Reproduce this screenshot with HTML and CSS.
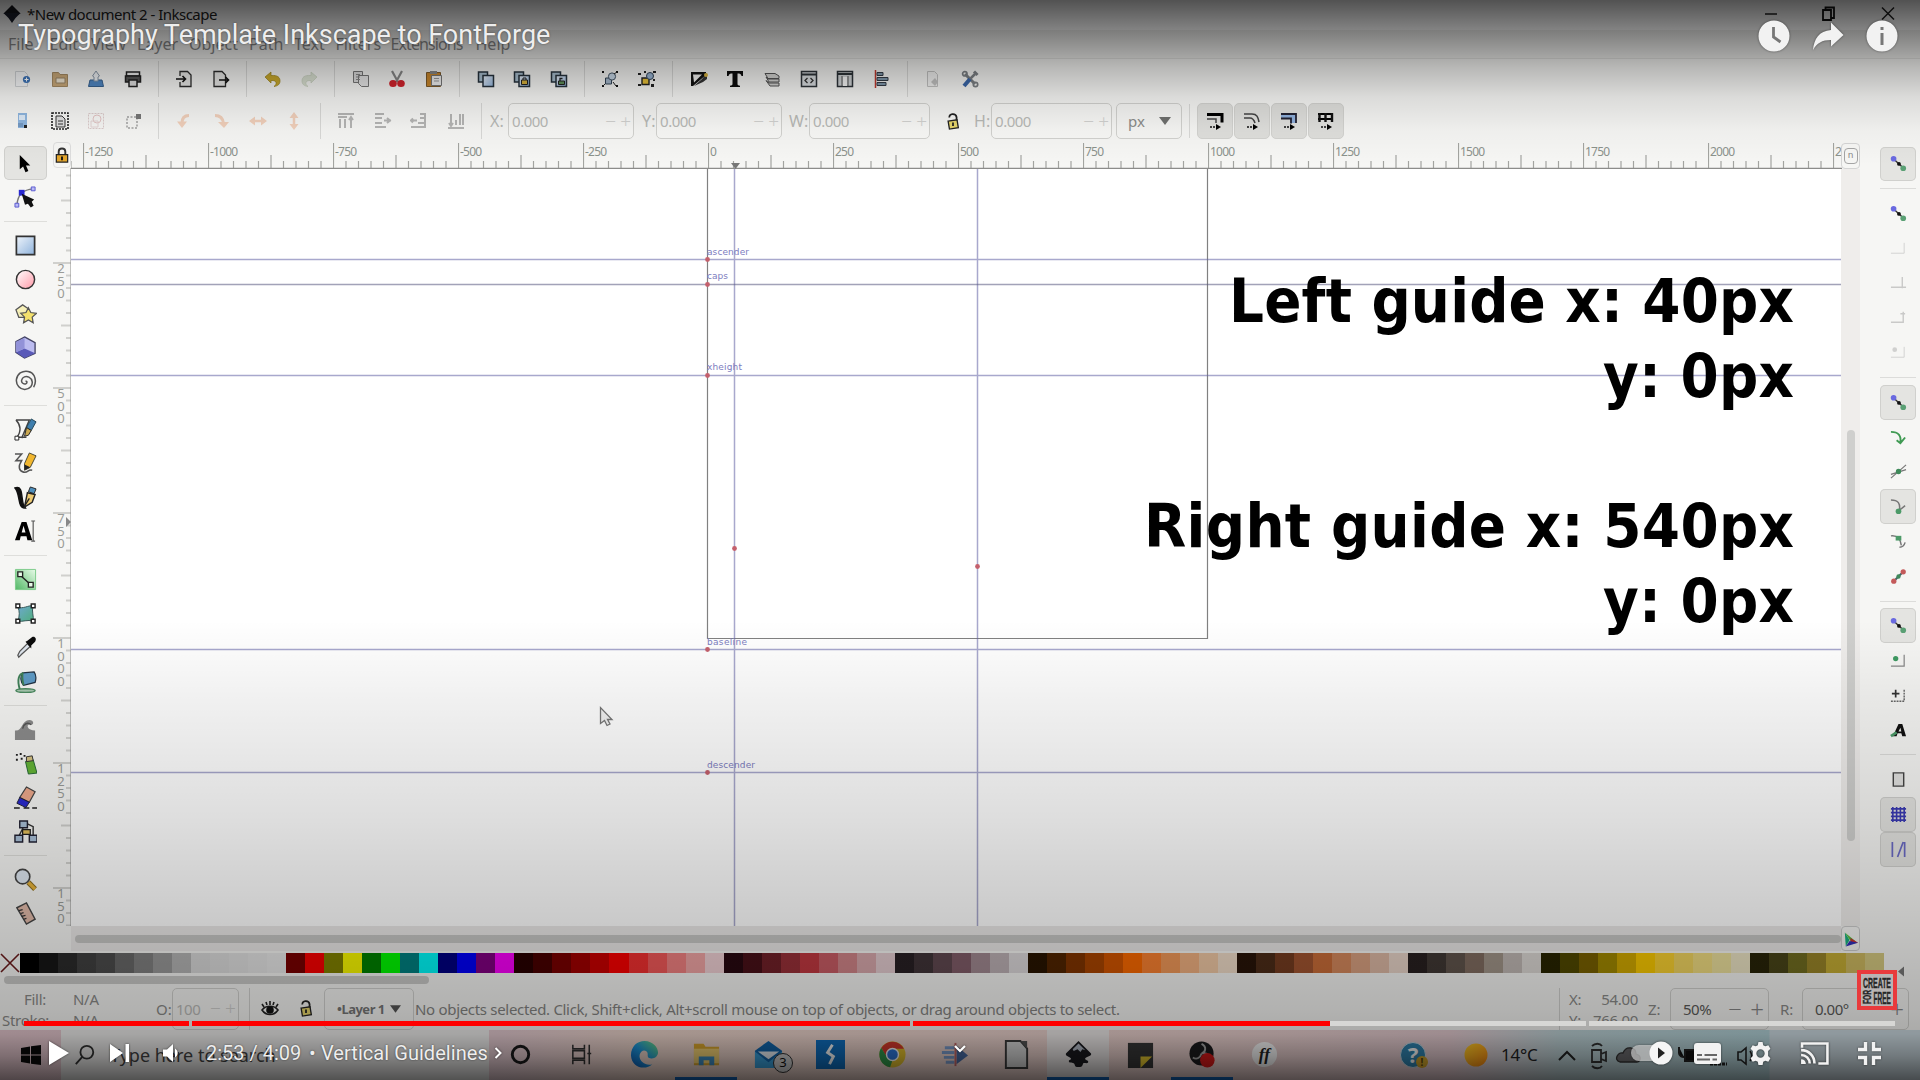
FILE: index.html
```html
<!DOCTYPE html>
<html lang="en">
<head>
<meta charset="utf-8">
<title>Typography Template Inkscape to FontForge</title>
<link rel="stylesheet" href="styles.css">
</head>
<body>
<svg class="defs" aria-hidden="true">
  <defs>
    <linearGradient id="blueG" x1="0" y1="0" x2="1" y2="1"><stop offset="0" stop-color="#eef4fb"/><stop offset="1" stop-color="#8fb3dc"/></linearGradient>
    <linearGradient id="pinkG" x1="0" y1="0" x2="1" y2="1"><stop offset="0" stop-color="#fff"/><stop offset="1" stop-color="#ff9aa8"/></linearGradient>
    <linearGradient id="greenG" x1="1" y1="0" x2="0" y2="1"><stop offset="0" stop-color="#e8fbe8"/><stop offset="1" stop-color="#52b866"/></linearGradient>
    <linearGradient id="tealG" x1="0" y1="0" x2="1" y2="1"><stop offset="0" stop-color="#6fa8d0"/><stop offset="1" stop-color="#4fae7c"/></linearGradient>
    <linearGradient id="edgeG" x1="0" y1="1" x2="1" y2="0"><stop offset="0" stop-color="#0c59b4"/><stop offset=".5" stop-color="#1d9ae0"/><stop offset="1" stop-color="#6fdc7c"/></linearGradient>
    <linearGradient id="sunG" x1="0" y1="0" x2="1" y2="1"><stop offset="0" stop-color="#ffd028"/><stop offset="1" stop-color="#ff8a10"/></linearGradient>
  </defs>
  <symbol id="dup" viewBox="0 0 18 18"><path d="M1.500 2h9v10h-9z" fill="#a9bfcf" stroke="#26323c" stroke-width="1.500"/><path d="M6 5.500h10.500v11H6z" fill="url(#blueG)" stroke="#26323c" stroke-width="1.500"/></symbol>
  <symbol id="snap" viewBox="0 0 18 18"><path d="M3 3.500l12 11" stroke="#333" stroke-width="1.500"/><circle cx="3.800" cy="4" r="3" fill="#6a6ae0"/><circle cx="14" cy="14" r="3" fill="#5aa074"/><circle cx="9.500" cy="9.500" r="2" fill="#111"/></symbol>
  <symbol id="padlock" viewBox="0 0 18 20"><path d="M5 5.500C4 1 12 0 13 5v5" fill="none" stroke="#222" stroke-width="2"/><path d="M3.500 9.500l10-1.500 1.500 9-10 1.500z" fill="#e6d56a" stroke="#222" stroke-width="1.500"/><path d="M9 11v4" stroke="#222" stroke-width="2"/></symbol>
</svg>

<main class="video">
  <section class="frame">
    <header class="titlebar">
      <svg class="logo" viewBox="0 0 18 18"><path d="M9 0l8.500 8.500L9 12 .5 8.500z" fill="#15161c"/><path d="M.5 8l5 5 3.500 5 3.500-5 5-5z" fill="#1b1f2c"/></svg>
      <span class="doc-name">*New document 2 - Inkscape</span>
      <svg class="winbtns" viewBox="0 0 140 18"><path d="M5 9h12" stroke="#222" stroke-width="1.500"/><path d="M63 5h8v10h-8zM65.500 5V2.500H74V13h-3" fill="none" stroke="#111" stroke-width="1.800"/><path d="M122 2.500l12 12M134 2.500l-12 12" stroke="#222" stroke-width="1.500"/></svg>
    </header>
    <nav class="menubar">
      <span>File</span><span>Edit</span><span>View</span><span>Layer</span><span>Object</span><span>Path</span><span>Text</span><span>Filters</span><span>Extensions</span><span>Help</span>
    </nav>

    <div class="toolbar">
      <b><svg viewBox="0 0 18 18"><path d="M1.500 1.500h9l3 3v12h-12z" fill="#f5f6f7" stroke="#cfd2d4"/><circle cx="12.500" cy="9.500" r="3.600" fill="#3d74b8"/><path d="M12.500 7.500v4M10.500 9.500h4" stroke="#fff"/></svg></b>
      <b><svg viewBox="0 0 18 18"><path d="M1.500 2.500h6l1.500 2h7.500v12h-15z" fill="#c9a878" stroke="#a58a62"/><path d="M5 8h9v5H5z" fill="#eee4d0" stroke="#9a8668"/></svg></b>
      <b><svg viewBox="0 0 18 18"><path d="M3 10h12l1.500 6.500h-15z" fill="#4f86c2" stroke="#36618f"/><path d="M9 1l3.500 5-1.500 1v4H7V7L5.500 6z" fill="#eef1f4" stroke="#8a98a8"/></svg></b>
      <b><svg viewBox="0 0 18 18"><path d="M2.500 2h13v4h-13z" fill="#eee" stroke="#222" stroke-width="1.500"/><path d="M1.500 6h15v6h-15z" fill="#555" stroke="#222" stroke-width="1.500"/><path d="M5 10h8v6.500H5z" fill="#ddd" stroke="#222" stroke-width="1.500"/></svg></b>
      <i></i>
      <b><svg viewBox="0 0 18 18"><path d="M5 6V1.500h7.500L16 5v11.500H5V12" fill="#e8e8e6" stroke="#2c2c2c" stroke-width="1.300"/><path d="M1 9h9M7.500 6l3 3-3 3" fill="none" stroke="#111" stroke-width="1.600"/></svg></b>
      <b><svg viewBox="0 0 18 18"><path d="M2 1.500h8L13.500 5v11.500H2z" fill="#e8e8e6" stroke="#2c2c2c" stroke-width="1.300"/><path d="M7 10h9M13.500 7l3 3-3 3" fill="none" stroke="#111" stroke-width="1.600"/></svg></b>
      <i></i>
      <b><svg viewBox="0 0 18 18"><path d="M1 7l6-5v3.500c7-.5 9 2 9 5.500 0 3-2 5-6 5.500 3-2 3.500-6.500-3-6V13z" fill="#c9a92c" stroke="#9a8118" stroke-width=".7"/></svg></b>
      <b><svg viewBox="0 0 18 18" opacity=".45"><path d="M17 7l-6-5v3.500c-7-.5-9 2-9 5.500 0 3 2 5 6 5.500-3-2-3.500-6.500 3-6V13z" fill="#b9c9a9" stroke="#8ba07a" stroke-width=".7"/></svg></b>
      <i></i>
      <b><svg viewBox="0 0 18 18"><path d="M1.500 1.500h9v11h-9z" fill="#ddd" stroke="#777"/><path d="M6.500 5.500h10v11h-7l-3-3z" fill="#e6e6e6" stroke="#777"/><path d="M4 4.500h4M4 7h4M4 9.500h4" stroke="#888"/></svg></b>
      <b><svg viewBox="0 0 18 18"><path d="M4 1l6 11M14 1L8 12" stroke="#888" stroke-width="2.200"/><ellipse cx="5" cy="13.500" rx="3.800" ry="3.500" fill="#d2232c"/><ellipse cx="13" cy="13.500" rx="3.800" ry="3.500" fill="#d2232c"/></svg></b>
      <b><svg viewBox="0 0 18 18"><path d="M1.500 2.500h14v14h-14z" fill="#c8862c" stroke="#7d5a2a"/><path d="M5 1h7v3H5z" fill="#888"/><path d="M6.500 5.500h10v10h-10z" fill="#f0f0f0" stroke="#777"/><path d="M9 8.500h5M9 11h5" stroke="#999"/></svg></b>
      <i></i>
      <b><svg><use href="#dup"/></svg></b>
      <b><svg viewBox="0 0 18 18"><use href="#dup" width="18" height="18"/><path d="M8.500 10h6v4.500h-6z" fill="#d6b13c" stroke="#222"/><path d="M10 10V8h3v2" fill="none" stroke="#222"/></svg></b>
      <b><svg viewBox="0 0 18 18"><use href="#dup" width="18" height="18"/><path d="M8.500 11h6v3.500h-6z" fill="#5d8f58" stroke="#222"/><path d="M10 11V8.500h2.500" fill="none" stroke="#222" stroke-width="1.300"/></svg></b>
      <i></i>
      <b><svg viewBox="0 0 18 18"><path d="M4.500 8h6v6h-6z" fill="#a6b8cc" stroke="#345"/><circle cx="11" cy="6.500" r="3.600" fill="#c7d7e6" stroke="#456"/><path d="M1 1h2v2H1zM15 1h2v2h-2zM1 15h2v2H1zM15 15h2v2h-2z" fill="#111"/><path d="M12 12l3 4M4 14l-2 2M13 4l3-2" stroke="#222"/></svg></b>
      <b><svg viewBox="0 0 18 18"><path d="M4 8h7v6.500H4z" fill="#e8c138" stroke="#222" stroke-width="1.400"/><circle cx="12" cy="6" r="3.500" fill="#9bb6d4" stroke="#345"/><path d="M0 3h3v2H0zM6 1h2v2H6zM15 1h3v2h-3zM0 14h3v2H0zM13 14h3v3h-3zM15 9h2v2h-2z" fill="#222"/></svg></b>
      <i></i>
      <b><svg viewBox="0 0 18 18"><path d="M1 2h15v3L3 16H1z" fill="#111"/><path d="M3 4.500h9l-8 8z" fill="#f4f4f2"/><path d="M17 3v6l-4 3-9 4 8-7z" fill="#333"/><circle cx="16" cy="5" r="2" fill="#dcb63e"/></svg></b>
      <b><svg viewBox="0 0 18 18"><path d="M1 1h16v5h-1.500C15 4 14 3.500 11.500 3.500V14c0 1.500 1 1.500 2.500 1.800V17H4v-1.200c1.500-.3 2.500-.3 2.500-1.800V3.500C4 3.500 3 4 2.500 6H1z" fill="#0c0c0c"/></svg></b>
      <b><svg viewBox="0 0 18 18"><path d="M2 3.500h10l4 2.500v2.500H5zM3 7l2 2h11v3H6zM3 10.500l3 2.500h10v3H7z" fill="#d3d3d1" stroke="#555"/></svg></b>
      <b><svg viewBox="0 0 18 18"><path d="M1.500 1.500h15v15h-15z" fill="#d9dde0" stroke="#2d3338" stroke-width="1.500"/><path d="M2 4.500h14" stroke="#2d3338" stroke-width="2"/><path d="M7.500 8L5 10.500 7.500 13M10.500 8l2.500 2.500-2.500 2.500" fill="none" stroke="#333" stroke-width="1.300"/></svg></b>
      <b><svg viewBox="0 0 18 18"><path d="M1.500 1.500h15v15h-15z" fill="#cfd3d5" stroke="#2d3338" stroke-width="1.500"/><path d="M2 4h14" stroke="#2d3338" stroke-width="2"/><path d="M6 6v10M12 6v10" stroke="#555"/><path d="M7 7h4v9H7z" fill="#f6f6f6"/></svg></b>
      <b><svg viewBox="0 0 18 18"><path d="M2.500 0v18" stroke="#c0392f" stroke-width="1.500"/><path d="M4 2.500h6v3H4zM4 7.500h11v3H4zM4 12.500h9v3H4z" fill="#7f97ab" stroke="#333b45"/></svg></b>
      <i></i>
      <b><svg viewBox="0 0 18 18" opacity=".55"><path d="M3.500 1.500h7l3 3v12h-10z" fill="#eee" stroke="#999"/><path d="M7 12l4-4 3 4-3 4z" fill="#999"/></svg></b>
      <b><svg viewBox="0 0 18 18"><path d="M4 4l10 10" stroke="#7c8084" stroke-width="3"/><path d="M14 4L9 9" stroke="#7c8084" stroke-width="2.500"/><path d="M9 9l-6 7" stroke="#3a66a8" stroke-width="4"/><circle cx="3.800" cy="3.800" r="2.200" fill="none" stroke="#7c8084" stroke-width="1.700"/><circle cx="14.500" cy="14.500" r="2.200" fill="none" stroke="#7c8084" stroke-width="1.700"/><path d="M13 1.500l3.500 3.500" stroke="#7c8084" stroke-width="3"/></svg></b>
    </div>

    <div class="controls">
      <b><svg viewBox="0 0 18 18"><path d="M4 1h9v15H4z" fill="#8fb6df"/><path d="M5 3h6v5H5z" fill="#dce9f6"/><path d="M4 12h5M4 14h5" stroke="#5a7fa8"/><path d="M10 13h3v3h-3z" fill="#222"/></svg></b>
      <b><svg viewBox="0 0 18 18"><path d="M1 1h16v16H1z" fill="none" stroke="#222" stroke-width="1.600" stroke-dasharray="2 1"/><path d="M5 4h6l3 3v8H5z" fill="#ddd" stroke="#333"/><path d="M7 9h5M7 12h5" stroke="#333"/></svg></b>
      <b><svg viewBox="0 0 18 18" opacity=".45"><path d="M1.500 1.500h15v15h-15z" fill="none" stroke="#b99" stroke-dasharray="2 1"/><circle cx="10" cy="7" r="4" fill="none" stroke="#c88"/><path d="M4 9h7v6H4z" fill="none" stroke="#caa"/></svg></b>
      <b><svg viewBox="0 0 18 18"><path d="M3 5h10v11H3z" fill="none" stroke="#777" stroke-dasharray="2 1.500"/><path d="M12 2h5v5h-5z" fill="#777"/></svg></b>
      <i></i>
      <b class="dim"><svg viewBox="0 0 18 18"><path d="M14 3.500C9 3.500 7 6 7 11" fill="none" stroke="#e88a52" stroke-width="3"/><path d="M2 9.500h10L7 16z" fill="#e88a52"/></svg></b>
      <b class="dim"><svg viewBox="0 0 18 18"><path d="M3 3.500c6 0 8 3 8.500 8" fill="none" stroke="#e88a52" stroke-width="3"/><path d="M6 10h11l-5 6z" fill="#e88a52"/></svg></b>
      <b class="dim"><svg viewBox="0 0 18 18"><path d="M3 9h12" stroke="#e88a52" stroke-width="2.500"/><path d="M0 9l6-4.500v9zM18 9l-6-4.500v9z" fill="#e88a52"/></svg></b>
      <b class="dim"><svg viewBox="0 0 18 18"><path d="M9 3v12" stroke="#e88a52" stroke-width="2.500"/><path d="M9 0l4.500 6h-9zM9 18l4.500-6h-9z" fill="#e88a52"/></svg></b>
      <i></i>
      <b class="pale"><svg viewBox="0 0 18 18"><path d="M1 2h16M1 5h9M3 7v9M8 7v9M14 16V6M12 8l2-3 2 3" fill="none" stroke="#555" stroke-width="2"/></svg></b>
      <b class="pale"><svg viewBox="0 0 18 18"><path d="M1 2h9M1 6h7M1 11h7M1 15h11M10 8.500h7M13 6l3 2.500-3 2.500" fill="none" stroke="#555" stroke-width="2"/></svg></b>
      <b class="pale"><svg viewBox="0 0 18 18"><path d="M10 2h6M10 6h6M8 11h8M1 15h15M15 2v13M1 8.500h6M3 6.500l-2 2 2 2" fill="none" stroke="#555" stroke-width="2"/></svg></b>
      <b class="pale"><svg viewBox="0 0 18 18"><path d="M4 2v11M2 11l2 3 2-3M9 13V8M13 13V2M16 13V2M1 16h16" fill="none" stroke="#555" stroke-width="2"/></svg></b>
      <i></i>
      <label class="lx">X:</label><div class="spin wx"><span>0.000</span><em>−</em><em>+</em></div>
      <label class="ly">Y:</label><div class="spin wx"><span>0.000</span><em>−</em><em>+</em></div>
      <label class="lw">W:</label><div class="spin ww"><span>0.000</span><em>−</em><em>+</em></div>
      <svg class="lockw"><use href="#padlock"/></svg>
      <label class="lh">H:</label><div class="spin ww"><span>0.000</span><em>−</em><em>+</em></div>
      <div class="unit"><span>px</span><svg viewBox="0 0 12 8"><path d="M0 0h12L6 8z" fill="#6f706e"/></svg></div>
      <i class="tight"></i>
      <div class="toggles">
        <b><svg viewBox="0 0 18 18"><path d="M1 2.500h15v8" fill="none" stroke="#000" stroke-width="3"/><path d="M1 7h9v4" fill="none" stroke="#444" stroke-width="1.500"/><path d="M4 15h6" stroke="#111" stroke-width="1.500" stroke-dasharray="2 1"/><path d="M10 12l5 3-5 3z" fill="#000"/></svg></b>
        <b><svg viewBox="0 0 18 18"><path d="M1 2h8c5 0 6 3 7 8M1 6h6c3 0 4 2 5 5" fill="none" stroke="#444" stroke-width="1.600"/><path d="M4 15h6" stroke="#111" stroke-width="1.500" stroke-dasharray="2 1"/><path d="M10 12l5 3-5 3z" fill="#000"/></svg></b>
        <b><svg viewBox="0 0 18 18"><path d="M1 2h15v9h-5V6H1z" fill="#8fb0dc"/><path d="M1 2h15v9M1 6.500h10v5" fill="none" stroke="#223" stroke-width="1.800"/><path d="M4 15h6" stroke="#111" stroke-width="1.500" stroke-dasharray="2 1"/><path d="M10 12l5 3-5 3z" fill="#000"/></svg></b>
        <b><svg viewBox="0 0 18 18"><path d="M1 2h15M1 7h15" stroke="#000" stroke-width="2.200"/><path d="M2.500 1v9M8.500 1v9M15 1v9" stroke="#111" stroke-width="2.400"/><path d="M4 15h6" stroke="#111" stroke-width="1.500" stroke-dasharray="2 1"/><path d="M10 12l5 3-5 3z" fill="#000"/></svg></b>
      </div>
    </div>

    <div class="workspace">
      <aside class="tools">
        <b class="on"><svg viewBox="0 0 24 24"><path d="M7 3v15l3.500-3 2.500 6 3-1.300-2.500-5.700H18z" fill="#000" transform="translate(-1)"/></svg></b>
        <b><svg viewBox="0 0 24 24"><path d="M3 20C4 8 10 4 20 3" fill="none" stroke="#777" stroke-width="1.500"/><path d="M1 18h4v4H1zM18 1h4v4h-4z" fill="#b9b9f5" stroke="#5a5ad0"/><path d="M5 4h6v6H5z" fill="#2828d0"/><path d="M8 8l13 6-2.500 2.500 2 4-3 2-3-4-3 1z" fill="#111"/></svg></b>
        <i></i>
        <b><svg viewBox="0 0 24 24"><path d="M2.500 2.500h19v19h-19z" fill="url(#blueG)" stroke="#333" stroke-width="1.800"/></svg></b>
        <b><svg viewBox="0 0 24 24"><circle cx="12" cy="12" r="9.500" fill="url(#pinkG)" stroke="#333" stroke-width="1.500"/></svg></b>
        <b><svg viewBox="0 0 24 24"><path d="M2 8l7-5 6 4-1 9H5z" fill="#f6f0b8" stroke="#555" stroke-width="1.300"/><path d="M15 6l2.500 5 6 .8-4.500 4 1 6-5-3-5 3 1-6-4-4 5.500-.8z" fill="#f3e06c" stroke="#555" stroke-width="1.300"/></svg></b>
        <b><svg viewBox="0 0 24 24"><path d="M11 1l11 6v11l-11 5L2 17V6z" fill="#bcbcf0" stroke="#446" stroke-width="1.400"/><path d="M11 13l11 5-11 5-9-6z" fill="#5a5ab8"/><path d="M11 2v11l-9 4V6z" fill="#9292d8"/></svg></b>
        <b><svg viewBox="0 0 24 24"><path d="M12 12c2-1 2 2 0 2.500-3 .5-4.500-2-4-4 .7-3.300 4.500-4.500 7.500-3 4 2 4.500 7 2 10-3.500 4-9.500 3.500-12.500 0-4-4.500-3-11 1.500-14.500 5-3 12-2 14.500 3 1.700 3.500 1.700 8-.5 12" fill="none" stroke="#555" stroke-width="1.600"/></svg></b>
        <i></i>
        <b><svg viewBox="0 0 24 24"><path d="M2 2h14L8 21M2 2c5 5 6 12 1 18h10" fill="none" stroke="#444" stroke-width="1.500"/><path d="M1 19h4v4H1z" fill="#fff" stroke="#222"/><path d="M18 1l5 3-5 9-5-3z" fill="#3f7fae" stroke="#245"/><path d="M13 10l5 3-3 5-4 1z" fill="#caa850" stroke="#222"/></svg></b>
        <b><svg viewBox="0 0 24 24"><path d="M1 2h7L2 9h6c-4 6-3 11 2 12s4-3 9-2" fill="none" stroke="#555" stroke-width="1.600"/><path d="M16 1l7 3-6 12-6 3 0-7z" fill="#f1b62e" stroke="#443"/><path d="M11 13l6 3-6 3z" fill="#222"/></svg></b>
        <b><svg viewBox="0 0 24 24"><path d="M1 2c9-3 6 10 9 18l2 3C3 24 7 8 1 2z" fill="#111" stroke="#111" stroke-width="1.500"/><path d="M17 1l6 2-2 5-6-2z" fill="#4d8fbd" stroke="#222"/><path d="M14 7l8 2-3 8-8 5z" fill="#edca73" stroke="#222" stroke-width="1.500"/><path d="M11 21l5-8" stroke="#222" stroke-width="1.400"/></svg></b>
        <b><svg viewBox="0 0 24 24"><path d="M1 21L8 2h5l6 19h-5l-1-4H7l-1 4zM8 13h4l-2-7z" fill="#000" fill-rule="evenodd"/><path d="M18 1h4M20 1v21M18 22h4" stroke="#555" stroke-width="1.200"/></svg></b>
        <i></i>
        <b><svg viewBox="0 0 24 24"><path d="M1.500 1.500h21v21h-21z" fill="url(#greenG)" stroke="#7ccb8a"/><path d="M6 7l12 11" stroke="#222" stroke-width="1.500"/><path d="M4 4h5v5H4zM15 15h5v5h-5z" fill="#e8fbe8" stroke="#222" stroke-width="1.400"/></svg></b>
        <b><svg viewBox="0 0 24 24"><path d="M4 5c5 3 11-2 16-1-2 6 1 11 0 16-6-2-11 1-16 0 2-6 2-10 0-15z" fill="url(#tealG)" stroke="#355"/><path d="M2 2h4v4H2zM18 2h4v4h-4zM2 18h4v4H2zM18 18h4v4h-4z" fill="#fff" stroke="#222" stroke-width="1.500"/></svg></b>
        <b><svg viewBox="0 0 24 24"><path d="M14 8l3 3L8 19l-3 3-1-2 2-4z" fill="#dfe6ee" stroke="#555" stroke-width="1.300"/><path d="M12 6l2-1 5-4c3-1 5 2 3 5l-4 4v3z" fill="#0b0b0b"/></svg></b>
        <b><svg viewBox="0 0 24 24"><ellipse cx="12" cy="21.500" rx="10" ry="2" fill="#a8c8b0" stroke="#4b8a60" stroke-width="1.500"/><path d="M9 3l12-1c2 3 2 8 1 11l-12 3C7 13 6 7 9 3z" fill="#5e9bc6" stroke="#234" stroke-width="1.300"/><path d="M10 3C5 4 3 10 6 20M9 3c-1 5 0 9 1 13" fill="none" stroke="#3f8058" stroke-width="2"/></svg></b>
        <i></i>
        <b><svg viewBox="0 0 24 24"><path d="M1 13c8 1 7-11 15-11 5 0 5 5 2 5-6-2-5 6 4 6v10H1z" fill="#8b8b8b"/><path d="M9 11c1-5 5-7 9-4" fill="none" stroke="#555" stroke-width="1.500"/></svg></b>
        <b><svg viewBox="0 0 24 24"><path d="M12 10l8-2 4 14-9 1z" fill="#64b436" stroke="#263"/><path d="M13 5l6-1 1 5-7 1z" fill="#d6c383" stroke="#333"/><path d="M2 2h2v2H2zM6 1h2v2H6zM2 7h2v2H2zM7 6h2v2H7zM10 3h2v2h-2z" fill="#222"/></svg></b>
        <b><svg viewBox="0 0 24 24"><path d="M13 1l9 5-6 11-10-5z" fill="#eea98c" stroke="#444" stroke-width="1.300"/><path d="M6 12l10 5-3.500 5.500L3 18z" fill="#2a2ad0" stroke="#223"/><path d="M0 23h6M10 23h6M19 23h5" stroke="#222" stroke-width="1.600"/></svg></b>
        <b><svg viewBox="0 0 24 24"><path d="M10 7L5 17M14 4l6 3v9" fill="none" stroke="#333" stroke-width="1.500"/><path d="M6 1h8v7H6zM1 16h8v7H1zM16 16h8v7h-8z" fill="#a9c0d8" stroke="#223" stroke-width="1.500"/><path d="M9 10h8v5H9z" fill="#e3bf5c" stroke="#222" stroke-width="1.300"/></svg></b>
        <i></i>
        <b><svg viewBox="0 0 24 24"><path d="M15 15l7 7" stroke="#8a6d22" stroke-width="5.500"/><path d="M15 15l7 7" stroke="#e6b23a" stroke-width="3.500"/><circle cx="9" cy="9" r="7.500" fill="#dfe8f2" stroke="#444" stroke-width="1.700"/></svg></b>
        <b><svg viewBox="0 0 24 24"><path d="M3 6l10-5 9 17-9 5z" fill="#e0b9a8" stroke="#444" stroke-width="1.500"/><path d="M5 9l4-1M7 12l3-1M8 15l4-1M10 18l3-1" stroke="#333" stroke-width="1.300"/></svg></b>
      </aside>

      <div class="vruler-col">
        <div class="ruler-lock"><svg viewBox="0 0 14 18"><path d="M3.500 9V5c0-4.500 7-4.500 7 0v4" fill="none" stroke="#333" stroke-width="2"/><path d="M1 8h12v8H1z" fill="#e2a52c" stroke="#222" stroke-width="1.300"/><path d="M7 10v4" stroke="#111" stroke-width="2"/></svg></div>
        <svg class="vruler" width="19" height="758">
          <defs><pattern id="vt" width="19" height="125" y="94.500" patternUnits="userSpaceOnUse"><path d="M0 .5h19M8 63h11M13 13h6M13 25.500h6M13 38h6M13 50.500h6M13 75.500h6M13 88h6M13 100.500h6M13 113h6" stroke="#a9aaa6"/></pattern></defs>
          <rect width="19" height="758" fill="url(#vt)"/><path d="M18 0v758" stroke="#8c8c8a"/>
          <g class="vlabels"></g>
          <path d="M13 349l5 5-5 5z" fill="#888"/>
        </svg>
      </div>

      <div class="stage">
        <svg class="hruler" width="1771" height="29">
          <defs><pattern id="ht" width="125" height="29" x="12" patternUnits="userSpaceOnUse"><path d="M.5 3v25M63 15v13M13 21v7M25.500 21v7M38 21v7M50.500 21v7M75.500 21v7M88 21v7M100.500 21v7M113 21v7" stroke="#a3a4a0" stroke-width="1.200"/></pattern></defs>
          <rect width="1771" height="29" fill="url(#ht)"/><path d="M0 28.500h1771" stroke="#8c8c8a" stroke-width="1.300"/>
          <g class="hlabels"></g>
          <path d="M660 23h9l-4.500 6z" fill="#777"/>
        </svg>
        <svg class="canvas" width="1771" height="757" viewBox="71 169 1771 757">
          <path d="M707.500 169v469.500h500V169" fill="none" stroke="#808080" stroke-width="1.200"/>
          <path class="guide" d="M71 259.500h1771M71 375.500h1771M71 649.500h1771M71 772.500h1771M734.500 169v757M977.500 169v757"/>
          <path class="guide strong" d="M71 284.500h1771"/>
          <g fill="#c4606c"><circle cx="707.500" cy="259.500" r="2.400"/><circle cx="707.500" cy="284.500" r="2.400"/><circle cx="707.500" cy="375.500" r="2.400"/><circle cx="707.500" cy="649.500" r="2.400"/><circle cx="707.500" cy="772.500" r="2.400"/><circle cx="734.500" cy="548.500" r="2.400"/><circle cx="977.500" cy="566.500" r="2.400"/></g>
          <g class="gl"><text x="707" y="255" textLength="42">ascender</text><text x="707" y="279" textLength="21">caps</text><text x="707" y="370" textLength="35">xheight</text><text x="707" y="645" textLength="40">baseline</text><text x="707" y="768" textLength="48">descender</text></g>
          <g class="notes"><text x="1794" y="321.500" textLength="565">Left guide x: 40px</text><text x="1794" y="396.500" textLength="191">y: 0px</text><text x="1794" y="546.500" textLength="650">Right guide x: 540px</text><text x="1794" y="621.500" textLength="191">y: 0px</text></g>
          <path d="M600.500 707.500v16l4-3 2.500 5 3-1.500-2.500-4.500h4.500z" fill="#f2f2f2" stroke="#777" stroke-width="1.300"/>
        </svg>
        <div class="hscroll"><span></span></div>
      </div>

      <div class="vscroll-col">
        <div class="fit"><span>n</span></div>
        <div class="vscroll"><span></span></div>
        <div class="cms"><svg viewBox="0 0 18 18"><path d="M3 2l5 8-4 7z" fill="#18b080"/><path d="M3 2l12 10-6-1z" fill="#52c43c"/><path d="M9 8l8 5-8 1z" fill="#d03030"/><path d="M4 17l4-6 9 2z" fill="#3030b8"/></svg></div>
      </div>

      <aside class="snaps">
        <b class="on"><svg><use href="#snap"/></svg></b><i></i>
        <b><svg><use href="#snap"/></svg></b>
        <b class="off"><svg viewBox="0 0 18 18"><path d="M1 14h14V3" fill="none" stroke="#999"/></svg></b>
        <b class="off"><svg viewBox="0 0 18 18"><path d="M1 13h16M13 2v12M11 13h5" fill="none" stroke="#888" stroke-width="1.500"/></svg></b>
        <b class="off"><svg viewBox="0 0 18 18"><path d="M1 14h13V3M11 5h5" fill="none" stroke="#888" stroke-width="1.500"/></svg></b>
        <b class="off"><svg viewBox="0 0 18 18"><path d="M1 14h14V3" fill="none" stroke="#999"/><circle cx="5" cy="6" r="2.500" fill="#999"/></svg></b>
        <i></i>
        <b class="on"><svg><use href="#snap"/></svg></b>
        <b><svg viewBox="0 0 18 18"><path d="M1 3c8 0 11 4 10 11M7 12l4 3 5-6" fill="none" stroke="#3f9a52" stroke-width="2"/></svg></b>
        <b><svg viewBox="0 0 18 18"><path d="M1 16L17 2M1 12l16-5" stroke="#777" stroke-width="1.300"/><circle cx="9" cy="9" r="2.800" fill="#3f8a5a"/></svg></b>
        <b class="on"><svg viewBox="0 0 18 18"><path d="M1 2c8 0 10 4 9 11l6-5" fill="none" stroke="#777" stroke-width="1.600"/><circle cx="9" cy="14" r="3" fill="#4c9a68"/></svg></b>
        <b><svg viewBox="0 0 18 18"><path d="M1 3c8-1 10 4 11 10M10 15c3 0 5-1 6-5" fill="none" stroke="#777" stroke-width="1.500"/><path d="M6 3h6v5H6z" fill="#4c9a68"/></svg></b>
        <b><svg viewBox="0 0 18 18"><path d="M4 14l10-10" stroke="#466" stroke-width="2"/><circle cx="14" cy="4" r="2.800" fill="#c45a5a"/><circle cx="4" cy="14" r="2.800" fill="#c45a5a"/><circle cx="9" cy="9" r="2.300" fill="#3f8a5a"/></svg></b>
        <i></i>
        <b class="on"><svg><use href="#snap"/></svg></b>
        <b><svg viewBox="0 0 18 18"><path d="M1 15h14V3" fill="none" stroke="#888" stroke-width="1.300"/><circle cx="6" cy="7" r="2.800" fill="#3f9a62"/></svg></b>
        <b><svg viewBox="0 0 18 18"><path d="M1 15h14V3" fill="none" stroke="#666" stroke-width="1.500" stroke-dasharray="2 1"/><path d="M2 7h8M6 3v8" stroke="#333" stroke-width="1.800"/></svg></b>
        <b><svg viewBox="0 0 18 18"><path d="M3 15L9 2h4l4 13h-4l-1-3H8l-1 3zM9 10h3l-1-4z" fill="#111" fill-rule="evenodd"/><path d="M1 15l6-4" stroke="#4c9a68" stroke-width="3"/></svg></b>
        <i></i>
        <b><svg viewBox="0 0 18 18"><path d="M3.500 2h11v14h-11z" fill="#e2e2e0" stroke="#444" stroke-width="1.500"/></svg></b>
        <b class="on"><svg viewBox="0 0 18 18"><path d="M3 1v16M7 1v16M11 1v16M15 1v16M1 3h16M1 7h16M1 11h16M1 15h16" stroke="#3b3bb4" stroke-width="1.700"/></svg></b>
        <b class="on"><svg viewBox="0 0 18 18"><path d="M2.500 1v16M15.500 1v16M8 17L14 1" stroke="#6a6ac4" stroke-width="1.800"/></svg></b>
      </aside>
    </div>

    <div class="palette"><svg class="none" viewBox="0 0 20 20"><path d="M1 1l18 18M19 1L1 19" stroke="#6a1a1a" stroke-width="1.600"/></svg></div>
    <div class="pscroll"><span></span><svg viewBox="0 0 6 10"><path d="M6 0v10L0 5z" fill="#777"/></svg></div>

    <footer class="status">
      <div class="fs"><span>Fill:</span><span>N/A</span><span>Stroke:</span><span>N/A</span></div>
      <label>O:</label>
      <div class="spin op"><span>100</span><em>−</em><em>+</em></div>
      <i></i>
      <svg class="eye" viewBox="0 0 18 18"><path d="M1 10c4-5 12-5 16 0-4 6-12 6-16 0zM3 7L1 4M6 5L5 2M9 5V1M12 5l1-3M15 7l2-3" fill="none" stroke="#222" stroke-width="1.600"/><circle cx="9" cy="10" r="3.800" fill="#111"/></svg>
      <svg class="lk"><use href="#padlock"/></svg>
      <div class="layer"><span>•Layer 1</span><svg viewBox="0 0 12 8"><path d="M0 0h12L6 8z" fill="#555"/></svg></div>
      <p>No objects selected. Click, Shift+click, Alt+scroll mouse on top of objects, or drag around objects to select.</p>
      <i class="sep2"></i>
      <div class="xy"><span>X:</span><span>54.00</span><span>Y:</span><span>766.00</span></div>
      <label class="z">Z:</label>
      <div class="spin dark zoom"><span>50%</span><em>−</em><em>+</em></div>
      <label class="r">R:</label>
      <div class="spin dark rot"><span>0.00°</span><em>−</em><em>+</em></div>
    </footer>

    <div class="taskbar">
      <div class="start"><svg viewBox="0 0 20 20"><path d="M0 3l9-1.500V9.500H0zM10 1.300L20 0v9.500H10zM0 10.500h9v8L0 17zM10 10.500h10V20l-10-1.300z" fill="#0a0a0a"/></svg></div>
      <div class="search"><svg viewBox="0 0 24 24"><circle cx="14" cy="9" r="7" fill="none" stroke="#333" stroke-width="2"/><path d="M9 14l-7 8" stroke="#333" stroke-width="2"/></svg><span>Type here to search</span></div>
      <b><svg viewBox="0 0 30 30"><circle cx="15" cy="15" r="8.500" fill="none" stroke="#1a1a1a" stroke-width="3"/></svg></b>
      <b><svg viewBox="0 0 30 30"><path d="M5 5v4h12V5M5 25v-4h12v4M5 11h12v8H5zM22 5v20M20 14h4" fill="none" stroke="#333" stroke-width="1.600"/></svg></b>
      <b><svg viewBox="0 0 30 30"><path d="M15 1c9 0 14 7 14 12 0 4-4 7-8 6-4-1-2-3-3-6-1-2-4-3-6-1-6 6 2 16 11 13-6 6-21 5-22-9C1 6 8 1 15 1z" fill="url(#edgeG)"/></svg></b>
      <b class="open"><svg viewBox="0 0 30 30"><path d="M2 4h10l2 3h14v19H2z" fill="#e0aa2e"/><path d="M2 9h26v15H2z" fill="#f7d575"/><path d="M7 26v-9h16v9h-5v-5h-6v5z" fill="#3f8fc4"/></svg></b>
      <b><svg viewBox="0 0 30 30"><path d="M1 11L15 1l14 10v17H1z" fill="#1268b0"/><path d="M1 12l14 11 14-11v17H1z" fill="#3aa4e0"/><path d="M4 12h22l-11 8z" fill="#eef6fc"/></svg><span class="badge">3</span></b>
      <b><svg viewBox="0 0 30 30"><path d="M0 0h30v30H0z" fill="#0f6fc0"/><path d="M17 5l-5 8 6 4-4 8" fill="none" stroke="#fff" stroke-width="3"/></svg></b>
      <b><svg viewBox="0 0 30 30"><circle cx="15" cy="15" r="13.500" fill="#e6c22e"/><path d="M3.500 8a13.500 13.500 0 0 1 23.300 1H15l-6 9z" fill="#d93a2e"/><path d="M3.300 8L10 19l5 2-2.500 7.300A13.500 13.500 0 0 1 3.300 8z" fill="#319a4c"/><circle cx="15" cy="15" r="6.200" fill="#2f78de" stroke="#fff" stroke-width="1.500"/></svg></b>
      <b><svg viewBox="0 0 30 30"><path d="M5 8h10M2 13h13M4 18h11M6 23h9" stroke="#7d9fd0" stroke-width="3"/><path d="M17 6l12 10-12 9z" fill="#4a6da6"/><path d="M16 3v24" stroke="#c86868" stroke-width="2"/></svg></b>
      <b><svg viewBox="0 0 30 30"><path d="M4 1h15l7 8v20H4z" fill="#d9d9d9" stroke="#3c3c3c" stroke-width="2"/><path d="M19 1h7v8z" fill="#555"/></svg></b>
      <b class="open active"><svg viewBox="0 0 30 30"><path d="M15 1l13 13c1 3-5 3-6 5s4 2 3 4-4 0-5 1 0 4-5 4-3-3-5-4-5 0-5-2 3-1 2-3-6-2-5-5z" fill="#1a1a1f"/><path d="M15 3.500l7 7-3-1-2 3-3-3-4 2-1-2z" fill="#b9c0cc"/></svg></b>
      <b><svg viewBox="0 0 30 30"><path d="M2 3h26v26H2z" fill="#383838"/><path d="M15 29V17h12z" fill="#e9cb30"/></svg></b>
      <b class="open"><svg viewBox="0 0 30 30"><circle cx="14" cy="14" r="12.500" fill="#1c1c1e"/><path d="M14 4c6 3 4 9 0 10M5 18c4 3 8 0 9-4M22 19c0-5-4-6-8-5" fill="none" stroke="#aaa" stroke-width="2"/><circle cx="20" cy="21" r="7.500" fill="#e01a1a"/></svg></b>
      <b><svg viewBox="0 0 30 30"><circle cx="15" cy="15" r="13" fill="#fdfdfd"/><text x="15" y="21" class="ff">ff</text></svg></b>
      <svg class="tray" viewBox="0 0 500 50" width="500" height="50">
        <circle cx="27" cy="25" r="12.500" fill="#3187b4" stroke="#cfdfe8"/><text x="27" y="33" class="q">?</text><circle cx="36" cy="32" r="6" fill="#d7a92c"/><text x="36" y="36" class="ex">!</text>
        <circle cx="90" cy="25" r="11.500" fill="url(#sunG)"/>
        <path d="M173 30l8-8 8 8" fill="none" stroke="#222" stroke-width="2"/>
        <path d="M206 20h9v12h-9zM215 24l5-2v9l-5-2M206 16c3-3 8-3 10 0M206 36c3 3 8 3 10 0" fill="none" stroke="#333" stroke-width="1.800"/>
        <path d="M234 32c-7-2-2-10 3-9 3-8 13-6 13 1 7 2 4 9 0 8z" fill="#6d6d70" stroke="#333" stroke-width="1.300"/>
        <path d="M299 20h17v11h-17zM293 17v6c0 3 3 4 5 4" fill="#111" stroke="#222" stroke-width="2"/><path d="M324 34h17" stroke="#222" stroke-width="3" stroke-dasharray="3 1"/>
        <path d="M352 22h3l5-4v16l-5-4h-3zM364 21c2 3 2 7 0 10" fill="none" stroke="#222" stroke-width="1.600"/>
      </svg>
      <span class="temp">14°C</span>
    </div>
  </section>

  <div class="shade"></div>

  <div class="yt-top">
    <h1>Typography Template Inkscape to FontForge</h1>
    <svg viewBox="0 0 32 32"><circle cx="16" cy="16" r="15.500" fill="#f2f2f2"/><path d="M15.500 7v10l7 5" fill="none" stroke="#777" stroke-width="2.800"/></svg>
    <svg viewBox="0 0 32 32"><path d="M19 2.500L31.500 15 19 26.500V20C10 20 5 23 1 30 2 19 7 11 19 10z" fill="#f2f2f2"/></svg>
    <svg viewBox="0 0 32 32"><circle cx="16" cy="16" r="15.500" fill="#f2f2f2"/><path d="M16 13v12M16 7v3" stroke="#777" stroke-width="3"/></svg>
  </div>

  <div class="watermark"><svg viewBox="0 0 32 32" width="32" height="32"><text x="2" y="14" font-size="15" textLength="28" lengthAdjust="spacingAndGlyphs">CREATE</text><text x="12.500" y="29.500" font-size="17" textLength="17.500" lengthAdjust="spacingAndGlyphs">FREE</text><text transform="translate(10 30) rotate(-90)" font-size="10" textLength="14" lengthAdjust="spacingAndGlyphs">FOR</text></svg></div>

  <div class="yt-bottom">
    <div class="progress"><span class="c1"></span><span class="c2"></span><span class="c3"><i></i></span><span class="c4"></span></div>
    <div class="yt-controls">
      <svg class="play" viewBox="0 0 22 26"><path d="M1 1l20 12L1 25z" fill="#fff"/></svg>
      <svg class="next" viewBox="0 0 20 18"><path d="M0 0l13 9L0 18zM15.500 0H19v18h-3.500z" fill="#fff"/></svg>
      <svg class="vol" viewBox="0 0 18 18"><path d="M1 5.500h4L11 0v18l-6-5.500H1z" fill="#fff"/><path d="M13 4.500c3.500 2 3.500 7 0 9z" fill="#fff"/></svg>
      <span class="time">2:53 / 4:09</span><span class="dot">•</span><span class="chapter">Vertical Guidelines</span>
      <svg class="chev" viewBox="0 0 8 12"><path d="M1.500 1l5 5-5 5" fill="none" stroke="#fff" stroke-width="2"/></svg>
      <svg class="down" viewBox="0 0 12 8"><path d="M1 1l5 5 5-5" fill="none" stroke="#fff" stroke-width="2.200"/></svg>
      <svg class="auto" viewBox="0 0 42 24"><rect x="0" y="4" width="38" height="16" rx="8" fill="#ddd" opacity=".65"/><circle cx="30" cy="12" r="11.500" fill="#f5f5f5"/><path d="M27 6.500l7 5.500-7 5.500z" fill="#222"/></svg>
      <svg class="cc" viewBox="0 0 27 21"><rect width="27" height="21" rx="3" fill="#f2f2f2"/><path d="M3 12h5M10.500 12H23M3 16.500h13M18.500 16.500H23" stroke="#666" stroke-width="2"/></svg>
      <svg class="gear" viewBox="0 0 22 22"><path d="M9 0h4l.6 3 2 1.100L18.500 3l2 3.500L18.300 8.600v4.800l2.200 2.100-2 3.500-2.900-1.100-2 1.100L13 22H9l-.6-3-2-1.100L3.500 19l-2-3.500 2.200-2.100V8.600L1.500 6.500l2-3.500 2.900 1.100 2-1.100zM11 7a4 4 0 1 0 0 8 4 4 0 0 0 0-8z" fill="#f2f2f2" fill-rule="evenodd"/></svg>
      <svg class="cast" viewBox="0 0 30 24"><path d="M2 6V1.500h26.500v21H19M1 8.500c8 0 14 6 14 14M1 13.500c5 0 9 4 9 9" fill="none" stroke="#f2f2f2" stroke-width="2.700"/><path d="M1 18c3 0 5 2 5 5H1z" fill="#f2f2f2"/></svg>
      <svg class="exit" viewBox="0 0 23 23"><path d="M0 7.500h7.500V0M15.500 0v7.500H23M0 15.500h7.500V23M15.500 23v-7.500H23" fill="none" stroke="#f2f2f2" stroke-width="3.400"/></svg>
    </div>
  </div>
</main>
<script src="ui.js"></script>
</body>
</html>
```
FILE: styles.css
```css
* { box-sizing: border-box; }
body { margin: 0; background: #000; overflow: hidden; font-family: "Noto Sans", "Open Sans", sans-serif; }
.defs { position: absolute; width: 0; height: 0; }
.video { position: relative; width: 1920px; height: 1080px; overflow: hidden; }
.frame { display: flex; flex-direction: column; width: 1920px; height: 1080px; background: #f6f6f4; color: #777; }
b { font-weight: normal; }
i { font-style: normal; }
em { font-style: normal; }

.titlebar { display: flex; align-items: center; height: 30px; background: #fff; padding: 0 0 2px 3px; }
.logo { width: 18px; height: 18px; }
.doc-name { margin-left: 6px; font-size: 15px; color: #222; letter-spacing: -.52px; }
.winbtns { width: 140px; height: 18px; margin-left: auto; margin-right: 20px; }
.menubar { display: flex; height: 29px; align-items: center; padding-left: 8px; background: #f1f1ef; border-bottom: 1px solid #e2e2e0; font-size: 16px; color: #858585; }
.menubar span { flex: none; width: 41.5px; }
.menubar span:nth-child(3) { width: 46px; }
.menubar span:nth-child(4) { width: 52px; }
.menubar span:nth-child(5) { width: 60px; }
.menubar span:nth-child(6) { width: 45px; }
.menubar span:nth-child(8) { width: 55px; }
.menubar span:nth-child(9) { width: 85px; letter-spacing: -.9px; }

.toolbar, .controls { display: flex; align-items: center; height: 41px; padding-left: 4.500px; }
.toolbar { padding-bottom: 2px; }
.controls { height: 40px; padding-top: 2px; }
.toolbar > b, .controls > b { display: flex; flex: none; width: 36.700px; justify-content: center; }
.toolbar svg, .controls > b > svg { width: 18px; height: 18px; }
.toolbar > i, .controls > i { flex: none; width: 1px; height: 36px; margin: 0 6.900px; background: #d9d9d7; }
.dim { opacity: .35; }
.pale { opacity: .4; }
.controls label { font-size: 16px; color: #b9bab7; flex: none; }
.lx { width: 18px; margin-left: 1px; }
.ly { width: 14px; margin-left: 8px; }
.lw { width: 20px; margin-left: 7px; }
.lh { width: 17px; margin-left: 13px; }
.controls > .lockw { width: 16px; height: 19px; margin-left: 15px; flex: none; }
.spin { display: flex; align-items: center; flex: none; height: 36px; border: 1.500px solid #d2d2cf; border-radius: 5px; background: #f8f8f6; padding-left: 3px; font-size: 15px; color: #b9bab7; }
.spin span { flex: 1; letter-spacing: -.5px; }
.spin em { width: 15px; text-align: center; font-size: 19px; font-weight: 300; color: #d2d2d0; line-height: 1; }
.wx { width: 126px; }
.ww { width: 121px; }
.unit { display: flex; align-items: center; width: 66px; height: 36px; margin-left: 4px; border: 1.500px solid #d2d2cf; border-radius: 5px; padding-left: 11px; gap: 14px; font-size: 15px; color: #8b8c89; }
.unit svg { width: 12px; height: 8px; }
.controls > i.tight { margin: 0 7px 0 7px; height: 34px; }
.toggles { display: flex; gap: 1px; }
.toggles b { display: flex; align-items: center; justify-content: center; width: 36px; height: 36px; background: #dfdfdc; border: 1px solid #d3d3d0; border-radius: 5px; }
.toggles svg { width: 18px; height: 18px; }

.workspace { display: flex; height: 811px; }
.tools { width: 53px; padding: 6px 0 0 4px; }
.tools b { display: flex; align-items: center; justify-content: center; width: 43px; height: 34px; border-radius: 5px; }
.tools svg { width: 23px; height: 23px; }
.tools i { display: block; width: 43px; height: 1px; margin: 6.500px 0; background: #dededb; }
.on { background: #e4e4e1; box-shadow: inset 0 0 0 1px #d0d0cd; }
.vruler-col { width: 19px; }
.ruler-lock { display: flex; justify-content: center; align-items: center; width: 18px; height: 26px; margin: 2px 0 0; border: 1px solid #ddd; border-radius: 4px; }
.ruler-lock svg { width: 14px; height: 17px; }
.vruler { display: block; margin-top: 0; }
.vlabels, .hlabels { font: 12px "Noto Sans", sans-serif; fill: #8b928c; letter-spacing: -.8px; }
.vlabels { text-anchor: middle; font-size: 13px; fill: #9a9c98; letter-spacing: 0; }
.stage { width: 1770px; display: flex; flex-direction: column; margin-left: -1px; }
.hruler { display: block; flex: none; }
.canvas { display: block; flex: none; background: #fff; }
.guide { fill: none; stroke: #6060a4; stroke-opacity: .55; stroke-width: 1.500; }
.strong { stroke: #56567e; }
.gl { font: 9px "DejaVu Sans", sans-serif; fill: #7d7dc0; }
.notes { font: bold 61px "DejaVu Sans Condensed", "DejaVu Sans", sans-serif; font-stretch: condensed; text-anchor: end; fill: #000; }
.hscroll { height: 25px; padding: 9px 0 0 4px; background: #ebe9e8; }
.hscroll span { display: block; height: 8px; width: 1766px; border-radius: 4px; background: #c6c6c4; }
.vscroll-col { width: 19px; display: flex; flex-direction: column; }
.fit { display: flex; align-items: center; justify-content: center; width: 19px; height: 26px; margin-top: 3px; border: 1px solid #d4d4d4; border-radius: 4px; }
.fit span { width: 14px; height: 16px; border: 1.500px solid #a5a5a5; border-radius: 4px; font: 9px/12px "DejaVu Sans", sans-serif; text-align: center; color: #888; }
.vscroll { flex: 1; background: #efedeb; padding: 261px 0 0 6px; }
.vscroll span { display: block; width: 8px; height: 411px; border-radius: 4px; background: #cfcfcd; }
.cms { height: 25px; display: flex; align-items: center; justify-content: center; border: 1px solid #ccc; border-radius: 4px; }
.cms svg { width: 17px; height: 18px; }
.snaps { padding: 6.500px 0 0 20px; }
.snaps b { display: flex; align-items: center; justify-content: center; width: 36px; height: 34.800px; border-radius: 5px; }
.snaps svg { width: 17px; height: 17px; }
.snaps i { display: block; width: 36px; height: 1px; margin: 6.900px 0; background: #dcdcda; }
.off { opacity: .4; }

.palette { display: flex; height: 21px; padding-top: 1px; margin-top: 1px; }
.palette .none { width: 20px; height: 20px; flex: none; }
.palette span { flex: none; width: 19.020px; height: 20px; }
.pscroll { display: flex; height: 12px; padding: 3px 0 0 4px; }
.pscroll span { width: 425px; height: 8px; border-radius: 4px; background: #cacac8; }
.pscroll svg { width: 6px; height: 11px; margin: -10px 0 0 1469px; }

.status { display: flex; align-items: center; height: 45px; padding-top: 2px; font-size: 15px; color: #8c8c8a; }
.fs, .xy { display: grid; grid-template-columns: 71px 60px; grid-auto-rows: 21px; padding: 2px 0 0 2px; width: 156px; flex: none; letter-spacing: -.3px; }
.fs span:first-child { padding-left: 22px; }
.status label { flex: none; width: 16px; }
.status .op { width: 67px; color: #bdbdbb; height: 42px; }
.status .spin { background: transparent; height: 42px; }
.status > i { flex: none; width: 1px; height: 42px; margin: 0 10px; background: #d2d2d0; }
.eye { width: 18px; height: 18px; flex: none; margin-left: 1px; }
.lk { width: 16px; height: 19px; margin: 0 10px 0 19px; flex: none; }
.layer { display: flex; align-items: center; gap: 5px; flex: none; width: 90px; height: 42px; border: 1.500px solid #d2d2d0; border-radius: 5px; padding-left: 12px; font-size: 13px; font-weight: bold; color: #777; letter-spacing: -.5px; }
.layer svg { width: 11px; height: 8px; }
.status p { margin: 0 0 0 1px; width: 1144px; white-space: nowrap; flex: none; letter-spacing: -.31px; color: #858583; }
.status > i.sep2 { margin: 0 9px 0 0; }
.xy { width: 79px; padding: 2px 0 0; grid-template-columns: 20px 49px; }
.xy span:nth-child(even) { text-align: right; }
.status label.z { width: 22px; }
.status label.r { width: 22px; margin-left: 11px; }
.status .dark { color: #5c5c5a; padding-left: 12px; }
.status .dark em { color: #888; width: 22px; font-size: 24px; }
.zoom { width: 99px; }
.rot { width: 107px; padding-left: 16px; }

.taskbar { display: flex; position: relative; height: 50px; background: linear-gradient(90deg, #e6c8cf 0, #e6ccd2 500px, #eed6cc 640px, #ecd2cf 1200px, #e4cbd0 1450px, #bed2d6 1560px, #b4d4da 1769px, #cfdde4 1770px); color: #222; }
.start { width: 61px; display: flex; align-items: center; justify-content: center; }
.start svg { width: 20px; height: 20px; }
.search { width: 428px; background: #f0efee; display: flex; align-items: center; padding-left: 13px; gap: 14px; font-size: 18px; color: #444; }
.search svg { width: 22px; height: 22px; }
.taskbar > b { position: relative; width: 62px; flex: none; display: flex; align-items: center; justify-content: center; padding-bottom: 2px; }
.taskbar > b > svg { width: 29px; height: 31px; }
.taskbar .open { box-shadow: inset 0 -4px 0 -1px #1268c0; }
.taskbar .active { background: #eeeae9; }
.badge { position: absolute; left: 36px; top: 23px; width: 20px; height: 20px; border-radius: 50%; border: 1.500px solid #333; background: #d5d5d5; color: #111; font-size: 13px; line-height: 17px; text-align: center; }
.ff { font: italic bold 18px "Liberation Serif", serif; text-anchor: middle; fill: #222; }
.tray { margin-left: 91px; flex: none; }
.q { font: bold 22px "Noto Sans", sans-serif; text-anchor: middle; fill: #fff; }
.ex { font: bold 10px "Noto Sans", sans-serif; text-anchor: middle; fill: #5a4408; }
.temp { position: absolute; left: 1501px; top: 13px; font-size: 17px; letter-spacing: -.2px; color: #222; }

.shade { position: absolute; inset: 0; background:
  linear-gradient(180deg, rgba(0,0,0,.68) 0, rgba(0,0,0,.31) 58px, rgba(0,0,0,.25) 68px, rgba(0,0,0,.11) 97px, rgba(0,0,0,.03) 130px, transparent 165px),
  linear-gradient(180deg, transparent 620px, rgba(0,0,0,.06) 700px, rgba(0,0,0,.13) 815px, rgba(0,0,0,.21) 925px, rgba(0,0,0,.28) 1010px, rgba(0,0,0,.31) 1034px, rgba(0,0,0,.45) 1056px, rgba(0,0,0,.66) 1080px); }

.yt-top { position: absolute; left: 0; top: 0; width: 1920px; height: 72px; display: flex; align-items: center; padding: 0 22px 0 18px; gap: 22px; }
.yt-top h1 { flex: 1; margin: -2px 0 0; font: 400 27px Roboto, sans-serif; color: #eee; text-shadow: 0 0 2px rgba(0,0,0,.5); letter-spacing: -.01px; }
.yt-top svg { width: 32px; height: 32px; filter: drop-shadow(0 0 1px rgba(0,0,0,.5)); }
.watermark { position: absolute; left: 1857px; top: 970px; width: 40px; height: 40px; border: 4px solid #e93a3c; background: #b9b4b3; }
.watermark svg { display: block; }
.watermark text { font-family: "Liberation Sans", sans-serif; font-weight: bold; fill: #262626; stroke: #262626; stroke-width: .4; }
.yt-bottom { position: absolute; left: 24px; top: 1021px; width: 1872px; }
.progress { display: flex; gap: 3px; height: 5px; width: 1871px; }
.c1 { width: 165px; background: #f00; }
.c2 { width: 718px; background: #f00; }
.c3 { width: 673px; background: #d7d7d5; }
.c3 i { display: block; width: 417px; height: 5px; background: #f00; }
.c4 { flex: 1; background: #d7d7d5; }
.yt-controls { display: flex; align-items: center; height: 54px; font: 20px Roboto, sans-serif; color: #eee; }
.yt-controls svg { flex: none; filter: drop-shadow(0 0 1px rgba(0,0,0,.6)); }
.yt-controls span { text-shadow: 0 0 2px rgba(0,0,0,.6); white-space: nowrap; flex: none; }
.play { width: 22px; height: 26px; margin-left: 24px; }
.next { width: 20px; height: 18px; margin-left: 40px; }
.vol { width: 18px; height: 18px; margin-left: 32px; }
.time { width: 103px; margin-left: 26px; }
.dot { width: 12px; }
.chapter { width: 171px; letter-spacing: .05px; }
.chev { width: 8px; height: 12px; margin-left: 2px; }
.down { width: 12px; height: 8px; margin: -8px 0 0 452px; }
.auto { width: 42px; height: 24px; margin-left: 665px; }
.cc { width: 27px; height: 21px; margin-left: 21px; }
.gear { width: 23px; height: 23px; margin-left: 28px; }
.cast { width: 29px; height: 23px; margin-left: 28px; }
.exit { width: 23px; height: 23px; margin-left: 29px; }
```
FILE: ui.js
```js
const shades = (
  "000 161616 2b2b2b 404040 4c4c4c 686868 808080 989898 b4b4b4 d8d8d8 dcdcdc e0e0e0 e4e4e4 e8e8e8 " +
  "780000 f80000 808000 f8f800 008000 00f800 008080 00f8f8 000080 0000f8 800080 f800f8 " +
  "280000 480000 780000 a00000 c80000 f80000 f03030 f05858 f08080 f0a4a4 f0d0d4 " +
  "280810 481018 702028 983038 c03840 c85c64 d08488 d8a8ac e4ccd0 " +
  "282024 403438 604850 805c68 a08890 bcb0b4 dcd8da " +
  "281400 502400 803400 a84400 d05400 f86800 f88030 f09858 f0b080 f0c8a4 f0dcc8 " +
  "281408 4c2c18 743c20 a05430 c86c38 d4885c d8a080 dcb8a4 e8d4c8 " +
  "282020 403834 60544c 806c60 a09488 c0b8b4 dcd8d4 " +
  "282400 504800 786000 a08800 d0a800 f8c800 f8d030 f0d460 f0dc80 ece09c ece4c4 " +
  "282408 484418 706c20 988428 c4ac34 ccb860 d4c880"
).split(" ");
const palette = document.querySelector(".palette");
for (const c of shades) {
  const s = document.createElement("span");
  s.style.background = "#" + c;
  palette.append(s);
}

const NS = "http://www.w3.org/2000/svg";
function label(parent, x, y, text) {
  const t = document.createElementNS(NS, "text");
  t.setAttribute("x", x);
  t.setAttribute("y", y);
  t.textContent = text;
  parent.append(t);
}
const h = document.querySelector(".hlabels");
for (let v = -1250, x = 14; v <= 2250; v += 250, x += 125) label(h, x, 16, String(v));
const vl = document.querySelector(".vlabels");
for (let v = 250, y = 95; v <= 1500; v += 250, y += 125) {
  [...String(v)].forEach((d, i) => label(vl, 8, y + 10 + i * 12.5, d));
}
```
